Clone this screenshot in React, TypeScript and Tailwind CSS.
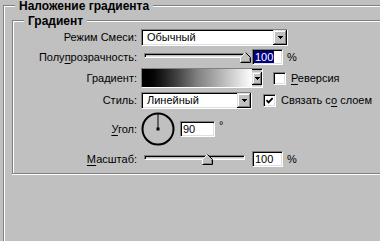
import React from "react";

/* Windows-classic bevels */
const sunken =
    "border border-t-[#808080] border-l-[#808080] border-b-white border-r-white shadow-[inset_1px_1px_0_#000,inset_-1px_-1px_0_#dfdfdf]";
const raised =
    "bg-[#c0c0c0] shadow-[inset_-1px_-1px_0_#000,inset_1px_1px_0_#dfdfdf,inset_-2px_-2px_0_#808080,inset_2px_2px_0_#fff]";

function Arrow() {
    return (
        <svg width="5" height="3" viewBox="0 0 5 3" shapeRendering="crispEdges">
            <path d="M0 0h5v1h-1v1h-1v1h-1v-1h-1v-1h-1z" fill="#000"/>
        </svg>
    );
}

function Select({width, value}: { width: string; value: string }) {
    return (
        <div className={`ml-[4px] h-[17px] flex items-stretch bg-white ${sunken} ${width}`}>
            <span className="flex-1 pl-[5px] leading-[15px]">{value}</span>
            <div className={`w-[14px] flex items-center justify-center ${raised}`}>
                <Arrow/>
            </div>
        </div>
    );
}

function Thumb() {
    return (
        <svg width="11" height="11" viewBox="0 0 11 11">
            <path d="M0.5 10.5V5.5L5.5 0.5L10.5 5.5V10.5Z" fill="#c0c0c0"/>
            <path d="M0.5 10V5.5L5.5 0.5" stroke="#fff" fill="none"/>
            <path d="M5.5 0.5L10.5 5.5V10.5H0.5" stroke="#000" fill="none"/>
            <path d="M1.5 9.5H9.5V6" stroke="#808080" fill="none"/>
        </svg>
    );
}

function Slider({pos}: { pos: number }) {
    return (
        <div className="relative ml-[7px] w-[101px] h-[11px]">
            <div className={`mt-[1px] h-[5px] w-full bg-[#c0c0c0] ${sunken}`}/>
            <div className="absolute top-0" style={{left: pos}}>
                <Thumb/>
            </div>
        </div>
    );
}

function Checkbox({checked}: { checked?: boolean }) {
    return (
        <div className={`w-[13px] h-[13px] bg-white flex items-center justify-center ${sunken}`}>
            {checked && (
                <svg width="7" height="7" viewBox="0 0 7 7">
                    <path d="M0.5 3.2L2.6 5.4L6.6 1" stroke="#000" strokeWidth="1.8" fill="none"/>
                </svg>
            )}
        </div>
    );
}

export default function App() {
    const label = "w-[124px] shrink-0 text-right";

    return (
        <div className="w-[380px] h-[241px] overflow-hidden bg-[#c0c0c0] pt-[5px] pl-[3px] text-[11px] leading-[13px] text-black font-['Liberation_Sans',Arial,sans-serif]">

            {/* outer group */}
            <div className="relative h-[260px] border-t border-l border-[#808080] shadow-[inset_1px_1px_0_#fff] pt-[14px] pl-[8px]">
                <span className="absolute -top-[7px] left-[11px] px-[4px] bg-[#c0c0c0] text-[12px] leading-[14px] font-bold">
                    Наложение градиента
                </span>

                {/* inner group */}
                <div className="relative border-t border-l border-b border-[#808080] shadow-[inset_1px_1px_0_#fff,0_1px_0_#fff] pt-[8px] pb-[6px]">
                    <span className="absolute -top-[7px] left-[11px] px-[4px] bg-[#c0c0c0] text-[12px] leading-[14px] font-bold">
                        Градиент
                    </span>

                    {/* blend mode */}
                    <div className="flex items-center h-[17px]">
                        <span className={label}>Режим Смеси:</span>
                        <Select width="w-[147px]" value="Обычный"/>
                    </div>

                    {/* opacity */}
                    <div className="flex items-center h-[16px] mt-[3px]">
                        <span className={label}>Полу<span className="underline underline-offset-2">п</span>розрачность:</span>
                        <Slider pos={96}/>
                        <div className={`ml-[7px] w-[31px] h-[16px] bg-white flex items-center pl-[1px] ${sunken}`}>
                            <span className="bg-[#000080] text-white px-[1px] leading-[12px]">100</span>
                        </div>
                        <span className="ml-[4px]">%</span>
                    </div>

                    {/* gradient */}
                    <div className="flex items-center h-[20px] mt-[3px]">
                        <span className={label}>Градиент:</span>
                        <div className={`ml-[4px] w-[122px] h-[20px] flex ${sunken}`}>
                            <div className="flex-1 bg-linear-to-r from-black via-[#808080] to-white"/>
                            <div className={`w-[10px] h-[13px] self-center flex items-center justify-center ${raised}`}>
                                <Arrow/>
                            </div>
                        </div>
                        <div className="ml-[10px]">
                            <Checkbox/>
                        </div>
                        <span className="ml-[5px]"><span className="underline underline-offset-2">Р</span>еверсия</span>
                    </div>

                    {/* style */}
                    <div className="flex items-center h-[17px] mt-[4px]">
                        <span className={label}>Стиль:</span>
                        <Select width="w-[111px]" value="Линейный"/>
                        <div className="ml-[11px]">
                            <Checkbox checked/>
                        </div>
                        <span className="ml-[5px]">Связать с<span className="underline underline-offset-2">о</span> слоем</span>
                    </div>

                    {/* angle */}
                    <div className="flex items-center h-[34px] mt-[3px]">
                        <span className={label}><span className="underline underline-offset-2">У</span>гол:</span>
                        <svg className="ml-[4px]" width="34" height="34" viewBox="0 0 34 34">
                            <circle cx="17" cy="17" r="15.5" stroke="#000" strokeWidth="2" fill="none"/>
                            <path d="M17 17V2" stroke="#000" strokeWidth="1"/>
                            <rect x="15.5" y="15.5" width="3" height="3" fill="#000"/>
                        </svg>
                        <div className={`ml-[5px] w-[35px] h-[16px] bg-white flex items-center pl-[2px] ${sunken}`}>
                            <span className="leading-[12px]">90</span>
                        </div>
                        <span className="ml-[4px] self-start mt-[8px] leading-[11px]">°</span>
                    </div>

                    {/* scale */}
                    <div className="flex items-center h-[16px] mt-[5px]">
                        <span className={label}><span className="underline underline-offset-2">М</span>асштаб:</span>
                        <Slider pos={58}/>
                        <div className={`ml-[7px] w-[31px] h-[16px] bg-white flex items-center pl-[2px] ${sunken}`}>
                            <span className="leading-[12px]">100</span>
                        </div>
                        <span className="ml-[4px]">%</span>
                    </div>
                </div>
            </div>
        </div>
    );
}
